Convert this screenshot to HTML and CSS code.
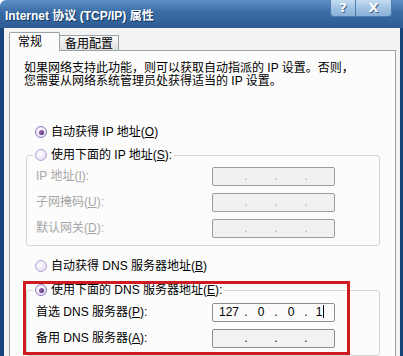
FILE: index.html
```html
<!DOCTYPE html>
<html>
	<head>
		<meta charset="utf-8" />
		<title>Internet 协议 (TCP/IP) 属性</title>
		<link rel="stylesheet" href="styles.css">
	</head>
	<body>
		<div class="window">
			<div class="titlebar">
				<span class="title">Internet 协议 (TCP/IP) 属性</span>
				<div class="caption">
					<span class="cbtn cbtn-help">?</span>
					<span class="cbtn cbtn-close">X</span>
				</div>
			</div>
			<div class="client">
				<div class="tabs">
					<span class="tab tab-on">常规</span>
					<span class="tab">备用配置</span>
				</div>
				<div class="panel">
					<p class="intro">如果网络支持此功能，则可以获取自动指派的 IP 设置。否则，<br>您需要从网络系统管理员处获得适当的 IP 设置。</p>

					<div class="opt opt-ip"><i class="rb rb-on"></i>自动获得 IP 地址(<u>O</u>)</div>
					<fieldset class="group">
						<legend><span class="opt"><i class="rb"></i>使用下面的 IP 地址(<u>S</u>):</span></legend>
						<div class="rows">
							<span class="lbl off">IP 地址(<u>I</u>):</span>
							<div class="ip off"><span></span><b>.</b><span></span><b>.</b><span></span><b>.</b><span></span></div>
							<span class="lbl off">子网掩码(<u>U</u>):</span>
							<div class="ip off"><span></span><b>.</b><span></span><b>.</b><span></span><b>.</b><span></span></div>
							<span class="lbl off">默认网关(<u>D</u>):</span>
							<div class="ip off"><span></span><b>.</b><span></span><b>.</b><span></span><b>.</b><span></span></div>
						</div>
					</fieldset>

					<div class="opt opt-dns"><i class="rb"></i>自动获得 DNS 服务器地址(<u>B</u>)</div>
					<fieldset class="group group-dns">
						<legend><span class="opt"><i class="rb rb-on"></i>使用下面的 DNS 服务器地址(<u>E</u>):</span></legend>
						<div class="rows">
							<span class="lbl">首选 DNS 服务器(<u>P</u>):</span>
							<div class="ip ip-on"><span>127</span><b>.</b><span>0</span><b>.</b><span>0</span><b>.</b><span>1<i class="caret"></i></span></div>
							<span class="lbl">备用 DNS 服务器(<u>A</u>):</span>
							<div class="ip"><span></span><b>.</b><span></span><b>.</b><span></span><b>.</b><span></span></div>
						</div>
					</fieldset>

					<div class="mark"></div>
				</div>
			</div>
		</div>
	</body>
</html>
```

FILE: styles.css
```css
html,body{margin:0;padding:0;}
body{width:403px;height:356px;overflow:hidden;background:#fff;font-size:12px;font-family:"Liberation Sans","Noto Sans CJK SC",sans-serif;color:#000;}

.window{height:430px;display:flex;flex-direction:column;}

/* 标题栏 */
.titlebar{
	height:28px;flex:none;display:flex;align-items:flex-start;
	background:linear-gradient(to bottom,#5f92c9 0%,#3c6ea8 40%,#2c5b93 100%);
	border-top-left-radius:6px;
}
.title{
	margin:9px 0 0 5px;line-height:14px;
	color:#fff;font-weight:bold;font-size:12px;
	text-shadow:1px 1px 0 #123760;
}
.caption{margin-left:auto;margin-right:11px;display:flex;}
.cbtn{
	height:17px;line-height:16px;text-align:center;box-sizing:border-box;
	color:#fff;font-weight:bold;font-size:13px;font-family:"DejaVu Sans",sans-serif;
	text-shadow:1px 1px 0 #3b6592;
	background:linear-gradient(to bottom,#c4dcf1 0%,#a2c2e3 50%,#8ab1d8 100%);
	border:1px solid #4f7cae;border-top:none;
}
.cbtn-help{width:25px;border-bottom-left-radius:4px;border-right:none;}
.cbtn-close{width:37px;border-bottom-right-radius:4px;}

/* 客户区 */
.client{
	flex:1;display:flex;flex-direction:column;
	background:#f3f3f3;
	border-left:4px solid #17457a;border-right:3px solid #17457a;
	padding:4px 4px 0 5px;
}
.tabs{display:flex;align-items:flex-end;height:19px;margin-bottom:-1px;position:relative;z-index:1;}
.tab{
	height:16px;line-height:16px;box-sizing:border-box;padding:0 5px;
	border:1px solid #9aa3a8;border-left:none;
	background:linear-gradient(to bottom,#fafafa,#dedede);
}
.tab-on{
	height:19px;line-height:18px;width:51px;padding:0 8px;
	border-left:1px solid #9aa3a8;border-bottom:none;
	background:#fcfcfc;border-top-left-radius:2px;border-top-right-radius:2px;
}
.panel{
	flex:1;position:relative;
	background:#fcfcfc;border:1px solid #9aa3a8;
}

.intro{margin:11px 0 0 14px;line-height:13px;}

/* 单选框 */
.opt{display:flex;align-items:center;height:16px;line-height:16px;margin-left:25px;}
.opt u,.lbl u{text-decoration:underline;}
.opt-ip{margin-top:36px;}
.rb{
	width:10px;height:10px;flex:none;margin-right:4px;border-radius:50%;
	border:1px solid #b3a5d6;
	background:radial-gradient(circle at 40% 40%,#fff 0%,#efe9f8 50%,#d9cdef 100%);
	display:flex;align-items:center;justify-content:center;
}
.rb-on{border-color:#8f7cbf;}
.rb-on::after{
	content:"";width:5px;height:5px;border-radius:50%;
	background:radial-gradient(circle at 35% 35%,#9b6fb8,#4b1f63);
}

/* 分组框 */
.group{
	margin:7px 15px 0 16px;padding:0 0 7px 9px;
	border:1px solid #d6d6d0;border-radius:3px;
}
.group legend{padding:0 2px;margin-left:-3px;}
.group legend .opt{margin-left:0;}
.rows{
	margin-top:4px;
	display:grid;grid-template-columns:176px 123px;row-gap:7px;align-items:center;
}
.lbl{line-height:19px;}
.off{color:#a6a6a6;}

.opt-dns{margin-top:12px;}
.group-dns{margin-top:8px;}
.group-dns .rows{margin-top:5px;}

/* IP 输入框 */
.ip{
	height:19px;box-sizing:border-box;
	display:grid;grid-template-columns:28px 6px 24px 6px 24px 6px 1fr;align-items:center;
	padding:0 3px 0 2px;
	border:1px solid #8e8e8e;border-radius:2px;
	background:#f2f2f2;
	line-height:17px;
}
.ip span{text-align:center;}
.ip b{font-weight:normal;text-align:center;}
.ip.off{border-color:#9c9c9c;background:#f1f1f1;}
.ip.off b{color:#b0b0b0;}
.ip-on{background:#fbfbfb;}
.caret{display:inline-block;width:1px;height:13px;background:#000;vertical-align:-2px;margin-left:1px;}

/* 红色标注框 */
.mark{
	position:absolute;left:13px;top:230px;width:327px;height:74px;
	box-sizing:border-box;border:3px solid #cf1b1f;
}
```
